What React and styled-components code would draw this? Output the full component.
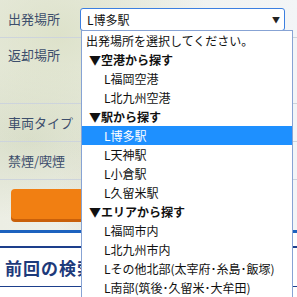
import React from "react";
import styled, { createGlobalStyle } from "styled-components";

const GlobalStyle = createGlobalStyle`
  body {
    margin: 0;
    font-family: "Noto Sans CJK JP", "Noto Sans", sans-serif;
  }
`;

const Page = styled.div`
  position: relative;
  width: 297px;
  height: 297px;
  overflow: hidden;
  background: #ffffff;
`;

const Form = styled.div`
  background:
    radial-gradient(ellipse at 20% 15%, rgba(214, 220, 190, 0.7), transparent 45%),
    radial-gradient(ellipse at 10% 60%, rgba(205, 212, 185, 0.6), transparent 40%),
    radial-gradient(ellipse at 50% 85%, rgba(220, 214, 190, 0.6), transparent 45%),
    linear-gradient(90deg, #eceee4 0%, #eef0e8 30%, #f3f5f7 100%);
`;

const Row = styled.div`
  display: flex;
  align-items: ${(p) => (p.top ? "flex-start" : "center")};
  height: ${(p) => p.h}px;
  border-bottom: 1px solid #cdd4dc;
`;

const Label = styled.div`
  width: 72px;
  padding-left: 8px;
  padding-top: ${(p) => (p.top ? "8px" : "0")};
  font-size: 13px;
  line-height: 18px;
  color: #3d4e6c;
  white-space: nowrap;
`;

const Select = styled.div`
  display: flex;
  align-items: center;
  justify-content: space-between;
  box-sizing: border-box;
  width: 205px;
  height: 23px;
  margin-top: 2px;
  padding: 0 4px 0 6px;
  background: #ffffff;
  border: 1.5px solid #3c7fe0;
  border-radius: 3px;
  font-size: 12px;
  color: #111;
`;

const Arrow = styled.span`
  font-size: 8px;
  color: #222;
`;

const ButtonArea = styled.div`
  height: 53px;
  padding: 9px 12px 0 11px;
  box-sizing: border-box;
  border-bottom: 3px solid #1c62bf;
`;

const SearchButton = styled.div`
  height: 30px;
  border-radius: 4px;
  background: #f17f12;
  box-shadow: 0 3px 0 #c9600a;
`;

const History = styled.div`
  margin-top: 13px;
  border-top: 2px solid #1d3f8c;
  border-bottom: 1px solid #1d3f8c;
  height: 38px;
  display: flex;
  align-items: center;
  padding-left: 5px;
`;

const HistoryTitle = styled.h2`
  margin: 0;
  font-size: 17px;
  font-weight: 700;
  letter-spacing: 1px;
  color: #1d3a7a;
  white-space: nowrap;
`;

const Dropdown = styled.ul`
  position: absolute;
  left: 81px;
  top: 30px;
  width: 210px;
  margin: 0;
  padding: 0;
  list-style: none;
  background: #ffffff;
  border: 1px solid #87a3d4;
  border-bottom: none;
`;

const Option = styled.li`
  height: 19px;
  line-height: 19px;
  font-size: 12px;
  white-space: nowrap;
  padding-left: ${(p) => (p.kind === "group" ? 7 : p.kind === "item" ? 22 : 4)}px;
  font-weight: ${(p) => (p.kind === "group" ? 700 : 400)};
  color: ${(p) => (p.selected ? "#ffffff" : "#111111")};
  background: ${(p) => (p.selected ? "#1e90ff" : "transparent")};
`;

const options = [
  { text: "出発場所を選択してください。", kind: "head" },
  { text: "▼空港から探す", kind: "group" },
  { text: "L福岡空港", kind: "item" },
  { text: "L北九州空港", kind: "item" },
  { text: "▼駅から探す", kind: "group" },
  { text: "L博多駅", kind: "item", selected: true },
  { text: "L天神駅", kind: "item" },
  { text: "L小倉駅", kind: "item" },
  { text: "L久留米駅", kind: "item" },
  { text: "▼エリアから探す", kind: "group" },
  { text: "L福岡市内", kind: "item" },
  { text: "L北九州市内", kind: "item" },
  { text: "Lその他北部(太宰府･糸島･飯塚)", kind: "item" },
  { text: "L南部(筑後･久留米･大牟田)", kind: "item" },
];

export default function App() {
  return (
    <Page>
      <GlobalStyle />
      <Form>
        <Row h={37}>
          <Label>出発場所</Label>
          <Select>
            <span>L博多駅</span>
            <Arrow>▼</Arrow>
          </Select>
        </Row>
        <Row h={65} top>
          <Label top>返却場所</Label>
        </Row>
        <Row h={37}>
          <Label>車両タイプ</Label>
        </Row>
        <Row h={37}>
          <Label>禁煙/喫煙</Label>
        </Row>
        <ButtonArea>
          <SearchButton />
        </ButtonArea>
      </Form>
      <History>
        <HistoryTitle>前回の検索</HistoryTitle>
      </History>
      <Dropdown>
        {options.map((o) => (
          <Option key={o.text} kind={o.kind} selected={o.selected}>
            {o.text}
          </Option>
        ))}
      </Dropdown>
    </Page>
  );
}
